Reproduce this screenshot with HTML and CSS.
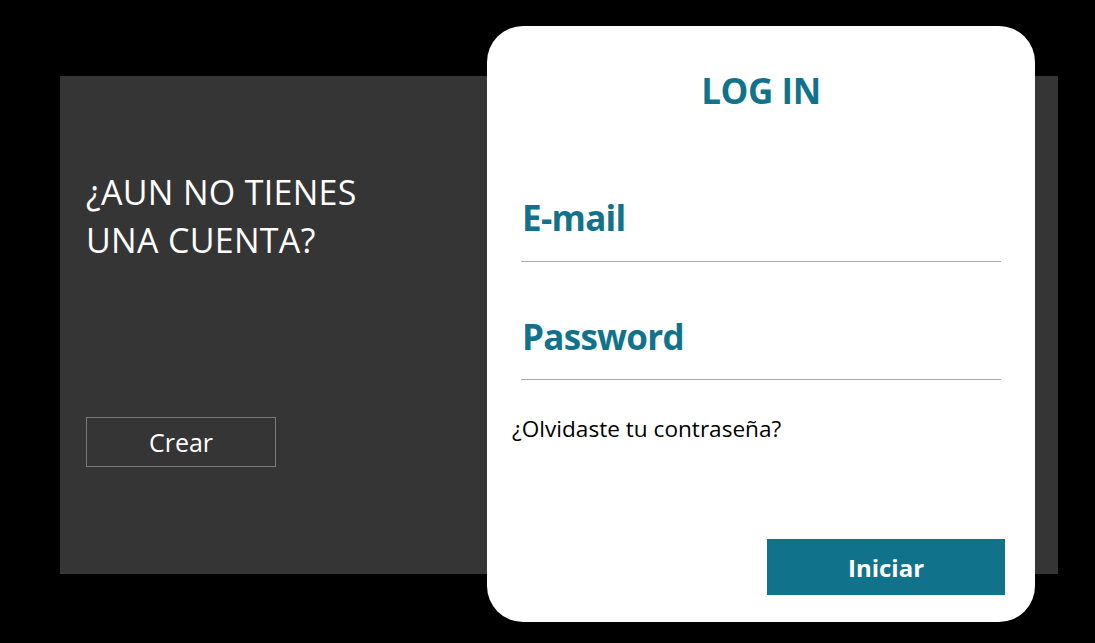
FILE: index.html
```html
<!DOCTYPE html>
<html lang="es">
<head>
<meta charset="utf-8">
<title>Log in</title>
<link rel="stylesheet" href="styles.css">
</head>
<body>
<div class="stage">
  <div class="panel">
    <section class="signup">
      <h2 class="signup-title">¿AUN NO TIENES<br>UNA CUENTA?</h2>
      <button class="btn-create">Crear</button>
    </section>
    <section class="card">
      <h1 class="card-title">LOG IN</h1>
      <div class="field"><span class="field-label">E-mail</span></div>
      <div class="field field-pass"><span class="field-label">Password</span></div>
      <a class="forgot">¿Olvidaste tu contraseña?</a>
      <div class="actions"><button class="btn-login">Iniciar</button></div>
    </section>
  </div>
</div>
</body>
</html>
```
FILE: styles.css
```css
html, body {
  margin: 0;
  padding: 0;
  background: #000;
  font-family: "Open Sans", "Noto Sans", sans-serif;
}
.stage {
  width: 1095px;
  height: 643px;
  padding: 76px 0 0 60px;
  box-sizing: border-box;
}
.panel {
  width: 998px;
  height: 498px;
  background: #353535;
  display: flex;
}
.signup {
  width: 427px;
  box-sizing: border-box;
  padding: 92px 0 0 26px;
  display: flex;
  flex-direction: column;
  align-items: flex-start;
}
.signup-title {
  margin: 0;
  color: #fff;
  font-weight: 400;
  font-size: 34px;
  letter-spacing: 0.3px;
  line-height: 48px;
}
.btn-create {
  margin-top: 153px;
  width: 190px;
  height: 50px;
  background: transparent;
  border: 1px solid #7a7a7a;
  color: #fff;
  font-family: inherit;
  font-size: 25px;
  padding: 0;
}
.card {
  width: 548px;
  height: 596px;
  margin-top: -50px;
  background: #fff;
  border-radius: 36px;
  box-sizing: border-box;
  padding: 43px 34px 27px 34px;
  display: flex;
  flex-direction: column;
}
.card-title {
  margin: 0;
  text-align: center;
  color: #11728b;
  font-size: 35px;
  font-weight: 700;
  letter-spacing: -0.4px;
  line-height: 44px;
}
.field {
  margin-top: 83px;
  border-bottom: 1px solid #aaa;
  height: 65px;
  padding-left: 1px;
  display: flex;
  align-items: flex-start;
}
.field-pass {
  margin-top: 53px;
  height: 64px;
}
.field-label {
  color: #11728b;
  font-size: 35px;
  font-weight: 700;
  letter-spacing: -0.7px;
  line-height: 44px;
}
.forgot {
  margin: 34px 0 0 -9px;
  color: #000;
  font-size: 22.6px;
  line-height: 30px;
}
.actions {
  margin-top: auto;
  display: flex;
  justify-content: flex-end;
  margin-right: -4px;
}
.btn-login {
  width: 238px;
  height: 56px;
  background: #11728b;
  border: none;
  color: #fff;
  font-family: inherit;
  font-size: 24px;
  font-weight: 700;
  padding: 0;
}
```
